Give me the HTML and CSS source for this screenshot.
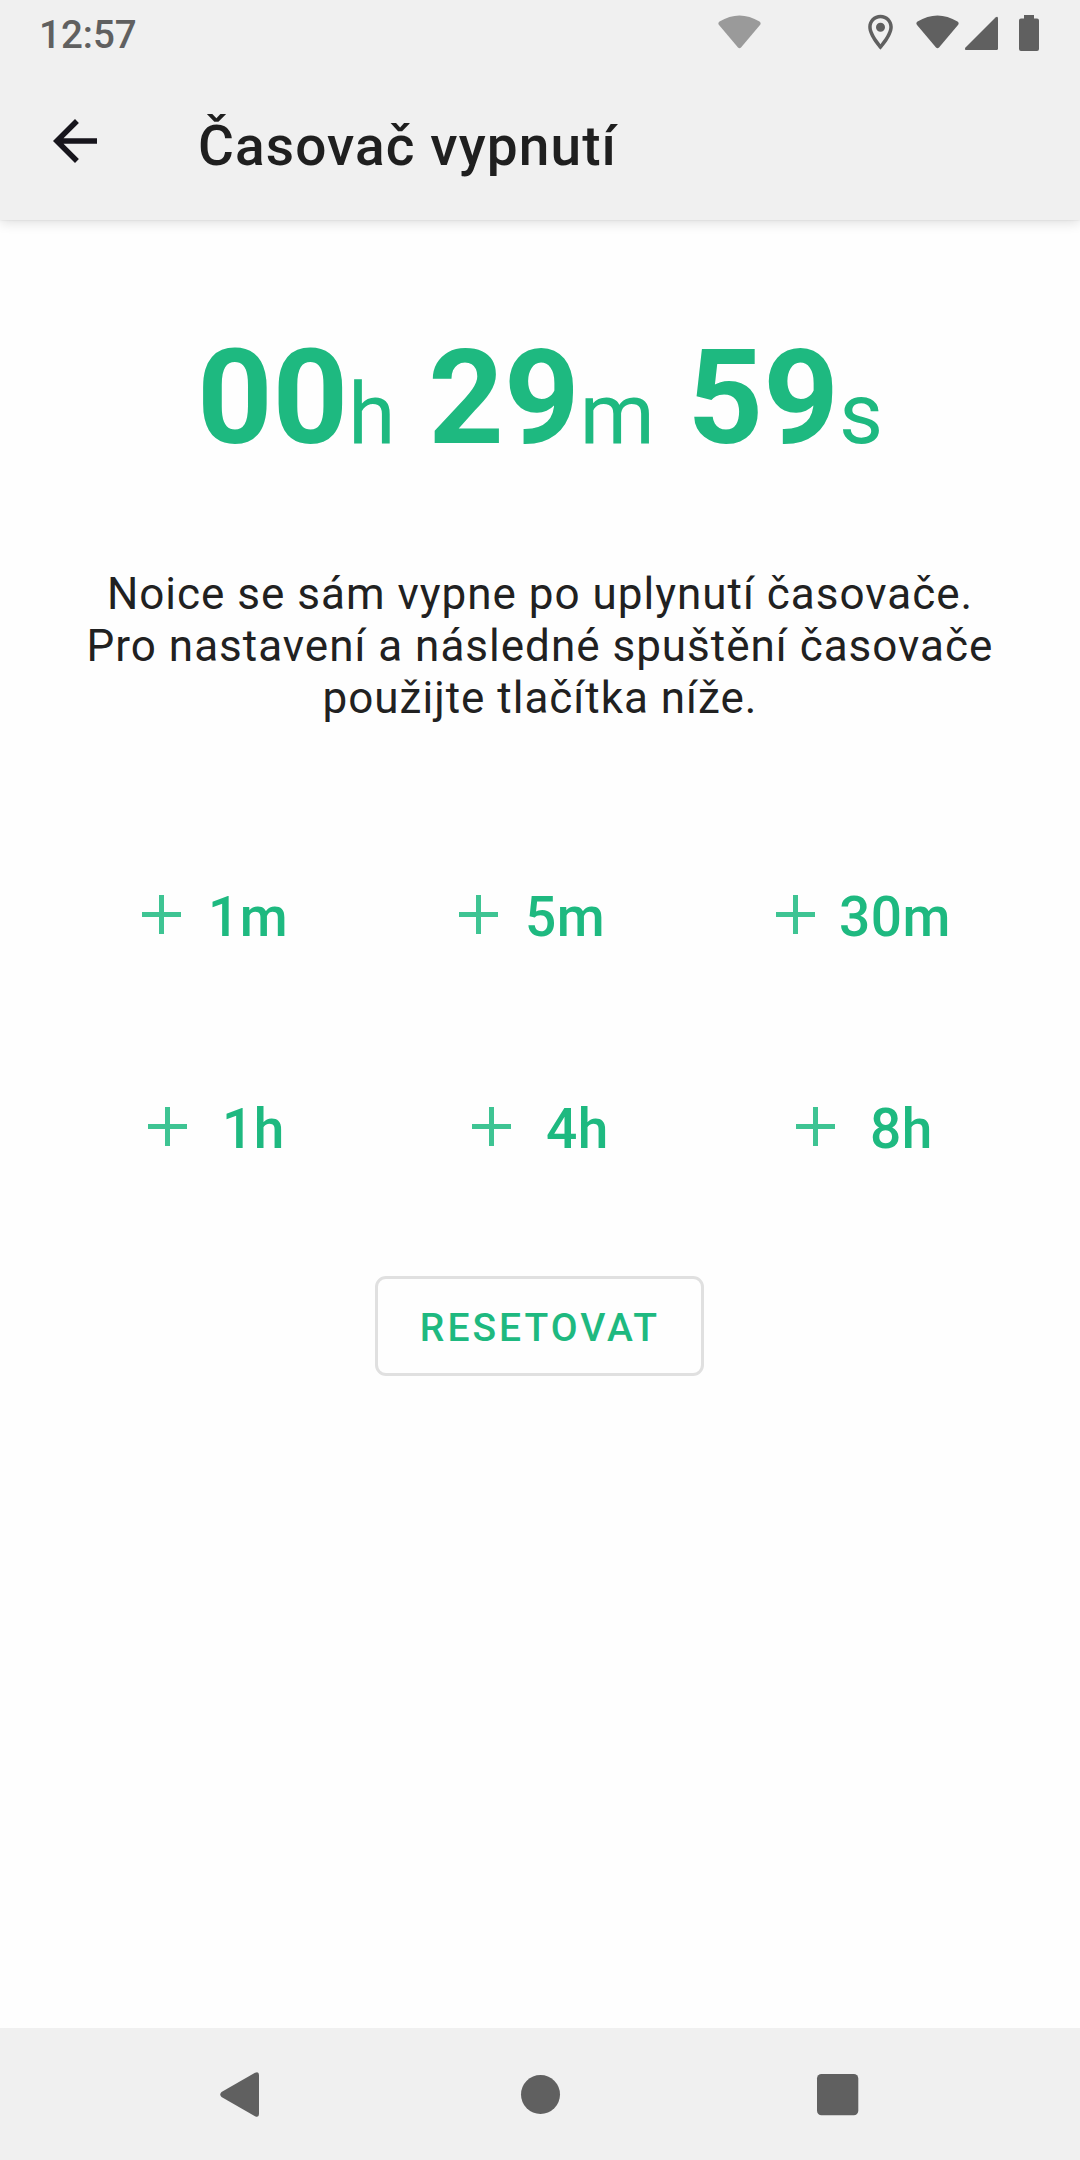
FILE: index.html
```html
<!DOCTYPE html>
<html lang="cs">
<head>
<meta charset="utf-8">
<title>Časovač vypnutí</title>
<link rel="stylesheet" href="styles.css">
</head>
<body>
<header class="top">
  <div class="status">
    <span class="clock">12:57</span>
    <svg class="status-icons" width="362" height="68" viewBox="718 0 362 68" fill="#606060">
      <path opacity=".6" d="M719.500 21.500Q739.500 9.500 759.500 21.500Q761.500 23 760 25L741 47.500Q739.500 49 738 47.500L719 25Q717.500 23 719.500 21.500Z"/>
      <path fill-rule="evenodd" d="M880.500 14.700c-6.900 0-12.300 5.500-12.300 12.300 0 9.500 12.300 22.700 12.300 22.700s12.300-13.200 12.300-22.700c0-6.800-5.400-12.300-12.300-12.300zm0 3.500c4.900 0 8.800 3.900 8.800 8.800 0 5.500-5.300 12.500-8.800 17.200-3.500-4.700-8.800-11.700-8.800-17.200 0-4.900 3.900-8.800 8.800-8.800zm0 4.500a4.500 4.500 0 1 0 0 9 4.500 4.500 0 0 0 0-9z"/>
      <path d="M917.500 21.500Q937.500 9.500 957.500 21.500Q959.500 23 958 25L939 47.500Q937.500 49 936 47.500L917 25Q915.500 23 917.500 21.500Z"/>
      <path d="M995.500 17.500Q998 15.500 998 18.500V48.500Q998 50 996.500 50H966Q964 49.500 965.500 47.500Z"/>
      <path d="M1024 15h10v3.500h3q2 0 2 2v28.500q0 2-2 2h-16q-2 0-2-2V20.500q0-2 2-2h3z"/>
    </svg>
  </div>
  <div class="toolbar">
    <svg class="back" width="66" height="66" viewBox="0 0 24 24"><path d="M20 11H7.830l5.590-5.590L12 4l-8 8 8 8 1.410-1.410L7.830 13H20z" fill="#17151c"/></svg>
    <h1 class="title">Časovač vypnutí</h1>
  </div>
</header>
<main class="content">
  <div class="timer">00<span class="unit">h</span> 29<span class="unit">m</span> 59<span class="unit">s</span></div>
  <p class="info">Noice se sám vypne po uplynutí časovače.<br>Pro nastavení a následné spuštění časovače<br>použijte tlačítka níže.</p>
  <div class="row minutes">
    <button class="add"><i class="plus"></i>1m</button>
    <button class="add"><i class="plus"></i>5m</button>
    <button class="add wide"><i class="plus"></i>30m</button>
  </div>
  <div class="row hours">
    <button class="add"><i class="plus"></i>1h</button>
    <button class="add"><i class="plus"></i>4h</button>
    <button class="add"><i class="plus"></i>8h</button>
  </div>
  <button class="reset">RESETOVAT</button>
</main>
<footer class="nav">
  <svg width="1080" height="132" viewBox="0 2028 1080 132" fill="#606060">
    <path d="M221.500 2092L255 2072.800Q259 2071 259 2075V2114Q259 2118 255 2116.200L221.500 2097Q219 2094.500 221.500 2092Z"/>
    <circle cx="540.500" cy="2094.500" r="19.500"/>
    <rect x="817" y="2074" width="41.300" height="41.300" rx="4.500"/>
  </svg>
</footer>
</body>
</html>
```
FILE: styles.css
```css
* { box-sizing: border-box; }
body { margin: 0; width: 1080px; height: 2160px; display: flex; flex-direction: column; background: #fefefe; font-family: Roboto, sans-serif; color: #212121; overflow: hidden; }
button { font: inherit; border: 0; padding: 0; background: none; }
svg { display: block; flex: none; }
.top { height: 220px; background: #f0f0f0; box-shadow: 0 2px 12px rgba(0,0,0,.14), 0 0 2px rgba(0,0,0,.1); }
.status { height: 68px; display: flex; justify-content: space-between; }
.clock { padding: 11px 0 0 39px; font-size: 38.500px; line-height: 48px; font-weight: 500; color: #606060; }
.toolbar { display: flex; padding-left: 42px; }
.back { margin-top: 40px; }
.title { margin: 48px 0 0 90px; font-size: 55px; line-height: 60px; font-weight: 500; letter-spacing: 1.100px; color: #1f1f1f; }
.content { flex: 1; display: flex; flex-direction: column; align-items: center; color: #1eb980; }
.timer { margin-top: 100px; font-size: 132px; font-weight: 700; line-height: 156px; white-space: pre; }
.unit { font-size: 85.500px; font-weight: 400; }
.info { margin: 76px 0 0; font-size: 44px; line-height: 52px; letter-spacing: 1px; text-align: center; color: #212121; }
.row { display: flex; width: 1080px; }
.minutes { margin-top: 163px; padding-left: 142px; }
.hours { margin-top: 152px; padding-left: 148px; }
.add { flex: none; width: 317px; display: flex; align-items: center; font-size: 55px; line-height: 60px; font-weight: 500; letter-spacing: .500px; color: #1eb980; }
.hours .add { width: 324px; }
.minutes .add:last-child, .hours .add:last-child { width: 240px; }
.plus { width: 39px; height: 39px; margin: 0 27px 6px 0; background: linear-gradient(#3ec493,#3ec493) center/39px 5px no-repeat, linear-gradient(#3ec493,#3ec493) center/5px 39px no-repeat; }
.wide .plus { margin-right: 24px; }
.hours .plus { margin-right: 35px; }
.reset { margin: 117px 1px 0 0; width: 329px; height: 100px; border: 3px solid #e0e0e0; border-radius: 11px; padding: 3px 0 0 1px; font-size: 39px; font-weight: 500; letter-spacing: 3px; color: #1eb980; }
.nav { height: 132px; background: #f0f0f0; }
```
